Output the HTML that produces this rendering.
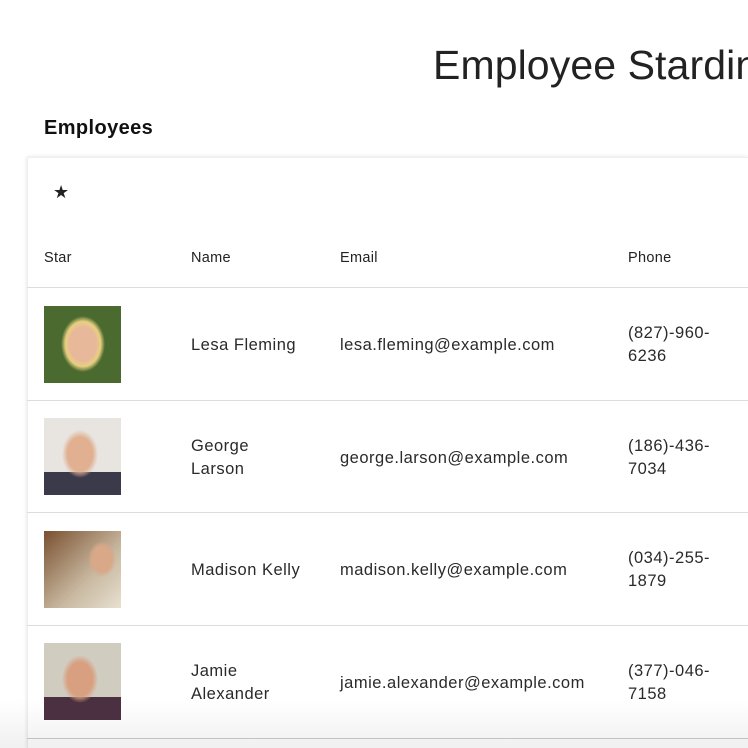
<!DOCTYPE html>
<html><head><style>
body{margin:0;width:748px;height:748px;overflow:hidden;background:#fff;font-family:"Liberation Sans",sans-serif;color:#222;position:relative}
.wrap{position:absolute;left:0;top:0;width:748px;height:748px;overflow:hidden}
.a{position:absolute;white-space:nowrap}
.t{font-size:16.5px;color:#2a2a2a;line-height:23px;letter-spacing:0.5px}
.h{font-size:14.5px;color:#222;letter-spacing:0.3px}
.line{position:absolute;left:27px;right:0;height:1px;background:#ddd}
.img{position:absolute;left:44px;width:77px;height:77px}
</style></head><body><div class="wrap">
<div class="a" style="left:433px;top:42px;font-size:41px;color:#222;letter-spacing:0.1px">Employee Stardin</div>
<div class="a" style="left:44px;top:117px;font-size:20px;font-weight:bold;color:#111;letter-spacing:0.4px">Employees</div>
<div style="position:absolute;left:27px;top:157px;right:0;bottom:0;box-shadow:0 0 4px rgba(0,0,0,0.12);border-left:1px solid #eee;border-top:1px solid #f0f0f0"></div>
<div class="a" style="left:53px;top:182px;font-size:18px">★</div>
<div class="a h" style="left:44px;top:250px">Star</div>
<div class="a h" style="left:191px;top:250px">Name</div>
<div class="a h" style="left:340px;top:250px">Email</div>
<div class="a h" style="left:628px;top:250px">Phone</div>
<div class="line" style="top:287px"></div>
<div class="line" style="top:400px"></div>
<div class="line" style="top:512px"></div>
<div class="line" style="top:625px"></div>
<div class="line" style="top:738px;background:#ccc"></div>
<div style="position:absolute;left:0;right:0;top:700px;height:48px;background:linear-gradient(rgba(0,0,0,0),rgba(0,0,0,0.06))"></div>

<div class="img" style="top:306px;background:radial-gradient(ellipse 22px 28px at 39px 38px,#e8b89a 60%,#e8d080 80%,transparent 100%),#4a6a30"></div>
<div class="a t" style="left:191px;top:334px">Lesa Fleming</div>
<div class="a t" style="left:340px;top:334px">lesa.fleming@example.com</div>
<div class="a t" style="left:628px;top:322px">(827)-960-<br>6236</div>

<div class="img" style="top:418px;background:radial-gradient(ellipse 18px 24px at 36px 36px,#e0b090 70%,transparent 100%),linear-gradient(#e8e4e0 70%,#3a3a4a 70%)"></div>
<div class="a t" style="left:191px;top:435px">George<br>Larson</div>
<div class="a t" style="left:340px;top:447px">george.larson@example.com</div>
<div class="a t" style="left:628px;top:435px">(186)-436-<br>7034</div>

<div class="img" style="top:531px;background:radial-gradient(ellipse 14px 18px at 58px 28px,#d8a888 70%,transparent 100%),linear-gradient(135deg,#7a5030,#c8b8a0 60%,#e8e0d0)"></div>
<div class="a t" style="left:191px;top:559px">Madison Kelly</div>
<div class="a t" style="left:340px;top:559px">madison.kelly@example.com</div>
<div class="a t" style="left:628px;top:547px">(034)-255-<br>1879</div>

<div class="img" style="top:643px;background:radial-gradient(ellipse 18px 24px at 36px 36px,#d8a080 70%,transparent 100%),linear-gradient(#d0ccc0 70%,#4a3040 70%)"></div>
<div class="a t" style="left:191px;top:660px">Jamie<br>Alexander</div>
<div class="a t" style="left:340px;top:672px">jamie.alexander@example.com</div>
<div class="a t" style="left:628px;top:660px">(377)-046-<br>7158</div>
</div></body></html>
